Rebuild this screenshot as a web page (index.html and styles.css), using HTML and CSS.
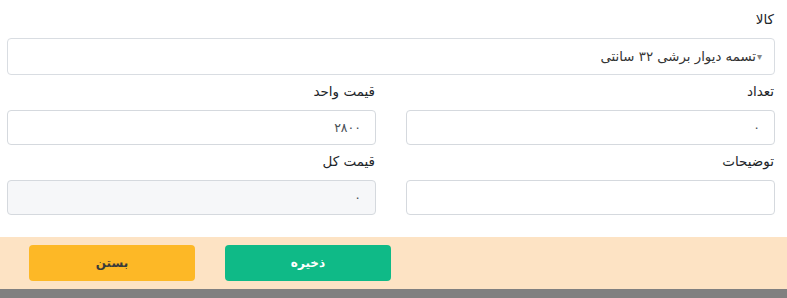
FILE: index.html
```html
<!DOCTYPE html>
<html lang="fa" dir="rtl">
<head>
<meta charset="utf-8">
<title>فرم کالا</title>
<link rel="stylesheet" href="styles.css">
</head>
<body>
<div class="form">
  <div class="group">
    <label class="label">کالا</label>
    <div class="select"><span class="caret">▾</span><span>تسمه دیوار برشی ۳۲ سانتی</span></div>
  </div>
  <div class="row">
    <div class="group">
      <label class="label">تعداد</label>
      <div class="input">۰</div>
    </div>
    <div class="group">
      <label class="label">قیمت واحد</label>
      <div class="input">۲۸۰۰</div>
    </div>
  </div>
  <div class="row">
    <div class="group">
      <label class="label">توضیحات</label>
      <div class="input"></div>
    </div>
    <div class="group">
      <label class="label">قیمت کل</label>
      <div class="input disabled">۰</div>
    </div>
  </div>
</div>
<div class="footer">
  <button class="btn btn-save">ذخیره</button>
  <button class="btn btn-close">بستن</button>
</div>
<div class="bottom-bar"></div>
</body>
</html>
```

FILE: styles.css
```css
html, body {
  margin: 0;
  padding: 0;
  background: #ffffff;
}
body {
  direction: rtl;
  font-family: "DejaVu Sans", "Noto Sans", sans-serif;
  font-size: 13px;
  color: #212529;
}
.form {
  padding: 9px 12px 0 7px;
  display: flex;
  flex-direction: column;
  gap: 6px;
}
.row {
  display: grid;
  grid-template-columns: 1fr 1fr;
  column-gap: 30px;
}
.group {
  display: flex;
  flex-direction: column;
}
.label {
  display: block;
  height: 20px;
  line-height: 20px;
  margin-bottom: 9px;
  padding-right: 1px;
  font-size: 13.5px;
  color: #212529;
}
.select {
  height: 37px;
  box-sizing: border-box;
  border: 1px solid #d9dde2;
  border-radius: 4px;
  display: flex;
  align-items: center;
  padding: 0 12px 0 12px;
  color: #333;
  font-size: 13.3px;
}
.caret {
  color: #888;
  font-size: 10px;
  margin-left: 1px;
}
.input {
  height: 35px;
  box-sizing: border-box;
  border: 1px solid #d5d9de;
  border-radius: 4px;
  display: flex;
  align-items: center;
  padding: 0 14px;
  color: #495057;
  font-size: 12.5px;
  background: #fff;
}
.input.disabled {
  background: #f6f7f9;
}
.footer {
  margin-top: 22px;
  height: 52px;
  box-sizing: border-box;
  background: #fde3c4;
  display: flex;
  flex-direction: row-reverse;
  justify-content: flex-end;
  align-items: center;
  gap: 30px;
  padding-left: 29px;
  direction: ltr;
}
.btn {
  width: 166px;
  height: 36px;
  border: none;
  border-radius: 4px;
  font-family: "DejaVu Sans", "Noto Sans", sans-serif;
  font-size: 12px;
  font-weight: bold;
  cursor: pointer;
}
.btn-save {
  background: #0fba87;
  color: #fff;
}
.btn-close {
  background: #fdb826;
  color: #3a3a3a;
}
.bottom-bar {
  height: 9px;
  background: #808080;
}
```
